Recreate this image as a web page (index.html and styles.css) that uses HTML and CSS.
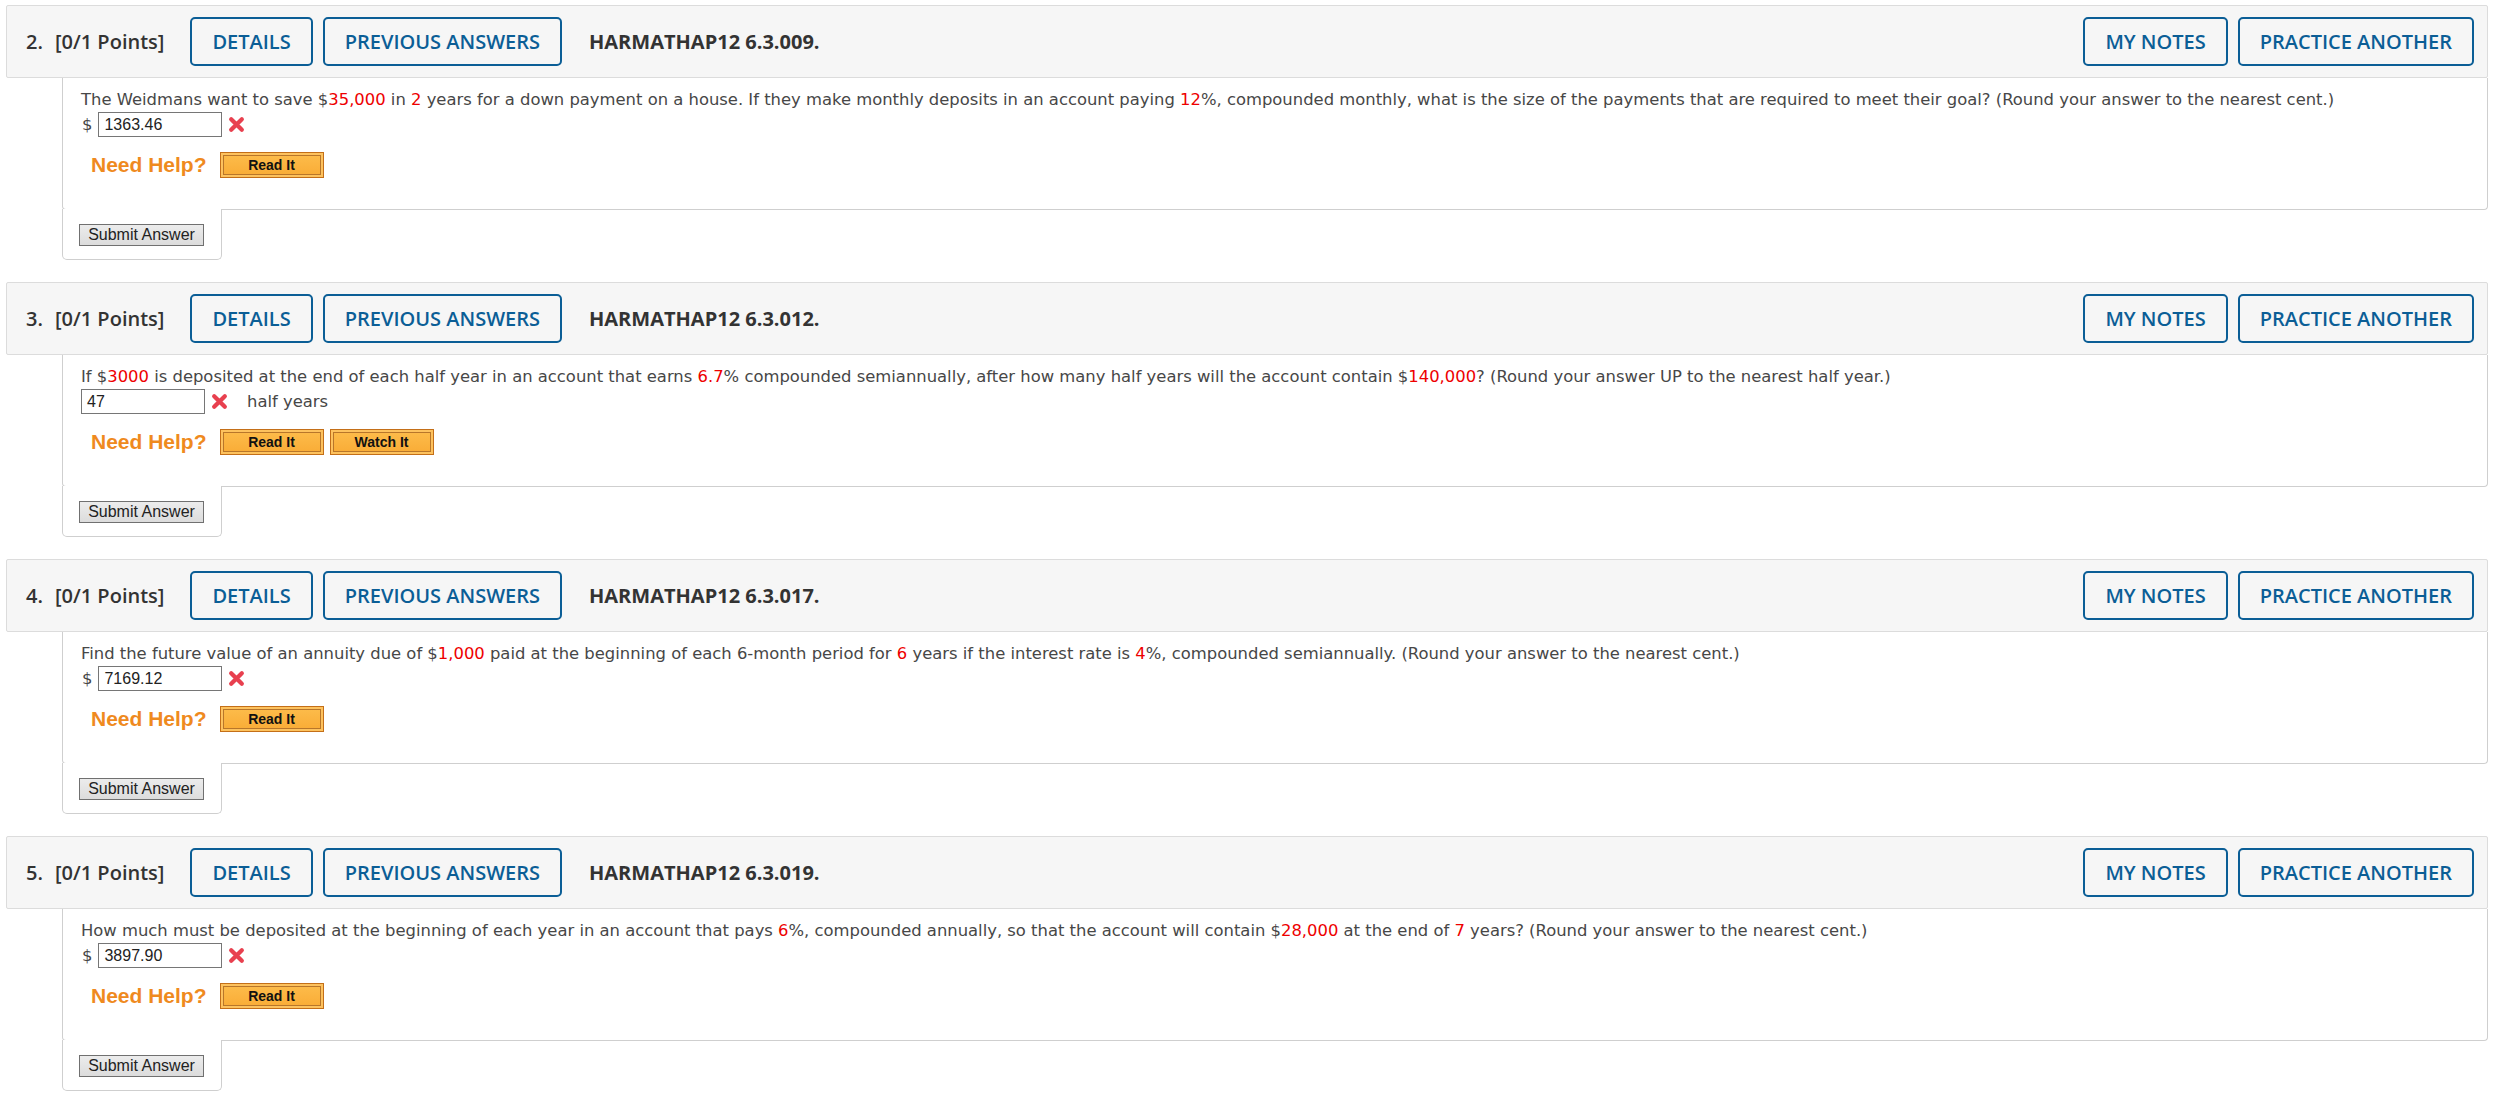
FILE: index.html
```html
<!DOCTYPE html>
<html>
<head>
<meta charset="utf-8">
<link rel="stylesheet" href="styles.css">
</head>
<body>
<div class="page">

  <section class="question">
    <div class="qhead">
      <div class="qnum"><span class="num">2.</span>[0/1 Points]</div>
      <a class="btn">DETAILS</a>
      <a class="btn">PREVIOUS ANSWERS</a>
      <div class="qcode">HARMATHAP12 6.3.009.</div>
      <div class="spacer"></div>
      <a class="btn">MY NOTES</a>
      <a class="btn">PRACTICE ANOTHER</a>
    </div>
    <div class="qbody">
      <p class="qtext">The Weidmans want to save $<span class="r">35,000</span> in <span class="r">2</span> years for a down payment on a house. If they make monthly deposits in an account paying <span class="r">12</span>%, compounded monthly, what is the size of the payments that are required to meet their goal? (Round your answer to the nearest cent.)</p>
      <div class="answer"><span class="cur">$</span><span class="inp">1363.46</span><svg class="xmark" viewBox="0 0 16 16"><path d="M3 3 L13 13 M13 3 L3 13"/></svg></div>
      <div class="help"><span class="need">Need Help?</span><span class="hbtn">Read It</span></div>
    </div>
    <div class="submitbox"><span class="submit">Submit Answer</span></div>
  </section>

  <section class="question">
    <div class="qhead">
      <div class="qnum"><span class="num">3.</span>[0/1 Points]</div>
      <a class="btn">DETAILS</a>
      <a class="btn">PREVIOUS ANSWERS</a>
      <div class="qcode">HARMATHAP12 6.3.012.</div>
      <div class="spacer"></div>
      <a class="btn">MY NOTES</a>
      <a class="btn">PRACTICE ANOTHER</a>
    </div>
    <div class="qbody">
      <p class="qtext">If $<span class="r">3000</span> is deposited at the end of each half year in an account that earns <span class="r">6.7</span>% compounded semiannually, after how many half years will the account contain $<span class="r">140,000</span>? (Round your answer UP to the nearest half year.)</p>
      <div class="answer"><span class="inp">47</span><svg class="xmark" viewBox="0 0 16 16"><path d="M3 3 L13 13 M13 3 L3 13"/></svg><span class="unit">half years</span></div>
      <div class="help"><span class="need">Need Help?</span><span class="hbtn">Read It</span><span class="hbtn">Watch It</span></div>
    </div>
    <div class="submitbox"><span class="submit">Submit Answer</span></div>
  </section>

  <section class="question">
    <div class="qhead">
      <div class="qnum"><span class="num">4.</span>[0/1 Points]</div>
      <a class="btn">DETAILS</a>
      <a class="btn">PREVIOUS ANSWERS</a>
      <div class="qcode">HARMATHAP12 6.3.017.</div>
      <div class="spacer"></div>
      <a class="btn">MY NOTES</a>
      <a class="btn">PRACTICE ANOTHER</a>
    </div>
    <div class="qbody">
      <p class="qtext">Find the future value of an annuity due of $<span class="r">1,000</span> paid at the beginning of each 6-month period for <span class="r">6</span> years if the interest rate is <span class="r">4</span>%, compounded semiannually. (Round your answer to the nearest cent.)</p>
      <div class="answer"><span class="cur">$</span><span class="inp">7169.12</span><svg class="xmark" viewBox="0 0 16 16"><path d="M3 3 L13 13 M13 3 L3 13"/></svg></div>
      <div class="help"><span class="need">Need Help?</span><span class="hbtn">Read It</span></div>
    </div>
    <div class="submitbox"><span class="submit">Submit Answer</span></div>
  </section>

  <section class="question">
    <div class="qhead">
      <div class="qnum"><span class="num">5.</span>[0/1 Points]</div>
      <a class="btn">DETAILS</a>
      <a class="btn">PREVIOUS ANSWERS</a>
      <div class="qcode">HARMATHAP12 6.3.019.</div>
      <div class="spacer"></div>
      <a class="btn">MY NOTES</a>
      <a class="btn">PRACTICE ANOTHER</a>
    </div>
    <div class="qbody">
      <p class="qtext">How much must be deposited at the beginning of each year in an account that pays <span class="r">6</span>%, compounded annually, so that the account will contain $<span class="r">28,000</span> at the end of <span class="r">7</span> years? (Round your answer to the nearest cent.)</p>
      <div class="answer"><span class="cur">$</span><span class="inp">3897.90</span><svg class="xmark" viewBox="0 0 16 16"><path d="M3 3 L13 13 M13 3 L3 13"/></svg></div>
      <div class="help"><span class="need">Need Help?</span><span class="hbtn">Read It</span></div>
    </div>
    <div class="submitbox"><span class="submit">Submit Answer</span></div>
  </section>

</div>
</body>
</html>
```

FILE: styles.css
```css
* { box-sizing: border-box; }
html, body { margin: 0; padding: 0; background: #fff; }
.page {
  padding: 5px 13px 0 6px;
}
.question {
  margin-bottom: 22px;
}
.qhead {
  display: flex;
  align-items: center;
  height: 73px;
  padding: 0 13px 0 19px;
  background: #f6f6f6;
  border: 1px solid #dcdcdc;
  border-radius: 2px;
  font-family: "Open Sans", "Liberation Sans", sans-serif;
  font-size: 20px;
  font-weight: 600;
  color: #333;
}
.qnum { margin-right: 26px; white-space: nowrap; }
.qnum .num { margin-right: 12px; }
.btn {
  display: flex;
  align-items: center;
  height: 49px;
  padding: 0 20px;
  margin-right: 10px;
  border: 2px solid #0b5e96;
  border-radius: 5px;
  color: #0b5e96;
  white-space: nowrap;
}
.btn:last-child { margin-right: 0; }
.qcode { margin-left: 17px; font-weight: 700; white-space: nowrap; }
.spacer { flex: 1; }

.qbody {
  margin-left: 56px;
  padding: 11px 18px 31px 18px;
  border: 1px solid #cfcfcf;
  border-top: none;
  border-radius: 0 0 4px 4px;
  background: #fff;
}
.qtext {
  margin: 0;
  font-family: "DejaVu Sans", Verdana, sans-serif;
  font-size: 16.4px;
  line-height: 22px;
  color: #474747;
}
.r { color: #e00; }
.answer {
  display: flex;
  align-items: center;
  height: 25px;
  margin-top: 1px;
  font-family: "Liberation Sans", Arial, sans-serif;
  font-size: 16px;
  color: #333;
}
.cur {
  font-family: "DejaVu Sans", Verdana, sans-serif;
  font-size: 16.4px;
  color: #474747;
  margin-left: 1px;
  margin-right: 6px;
}
.inp {
  display: flex;
  align-items: center;
  width: 124px;
  height: 25px;
  padding: 0 5px;
  border: 1px solid #767676;
  background: #fff;
  color: #222;
}
.xmark {
  width: 17px;
  height: 17px;
  margin-left: 6px;
}
.xmark path {
  fill: none;
  stroke: #e8404f;
  stroke-width: 4;
  stroke-linecap: round;
}
.unit {
  margin-left: 19px;
  font-family: "DejaVu Sans", Verdana, sans-serif;
  font-size: 16.4px;
  color: #474747;
}
.help {
  display: flex;
  align-items: center;
  gap: 6px;
  margin-top: 15px;
  margin-left: 10px;
  height: 26px;
}
.need {
  font-family: "Liberation Sans", Arial, sans-serif;
  font-size: 21px;
  font-weight: 700;
  color: #ef8a1e;
  margin-right: 7px;
}
.hbtn {
  display: flex;
  align-items: center;
  justify-content: center;
  width: 104px;
  height: 26px;
  border: 1px solid #c46f18;
  background: linear-gradient(#fdbd4c, #f9ab35);
  box-shadow: inset 0 0 0 2px #fdc25e, inset 0 0 0 3px #b8762a;
  font-family: "Liberation Sans", Arial, sans-serif;
  font-size: 14px;
  font-weight: 700;
  color: #111;
}
.submitbox {
  position: relative;
  margin-left: 56px;
  margin-top: -1px;
  width: 160px;
  height: 51px;
  padding: 15px 0 0 16px;
  background: #fff;
  border: 1px solid #cfcfcf;
  border-top: none;
  border-radius: 0 0 5px 5px;
}
.submit {
  display: inline-flex;
  align-items: center;
  justify-content: center;
  width: 125px;
  height: 22px;
  border: 1px solid #707070;
  background: linear-gradient(#ececec, #dcdcdc);
  font-family: "Liberation Sans", Arial, sans-serif;
  font-size: 16px;
  color: #222;
}
```
